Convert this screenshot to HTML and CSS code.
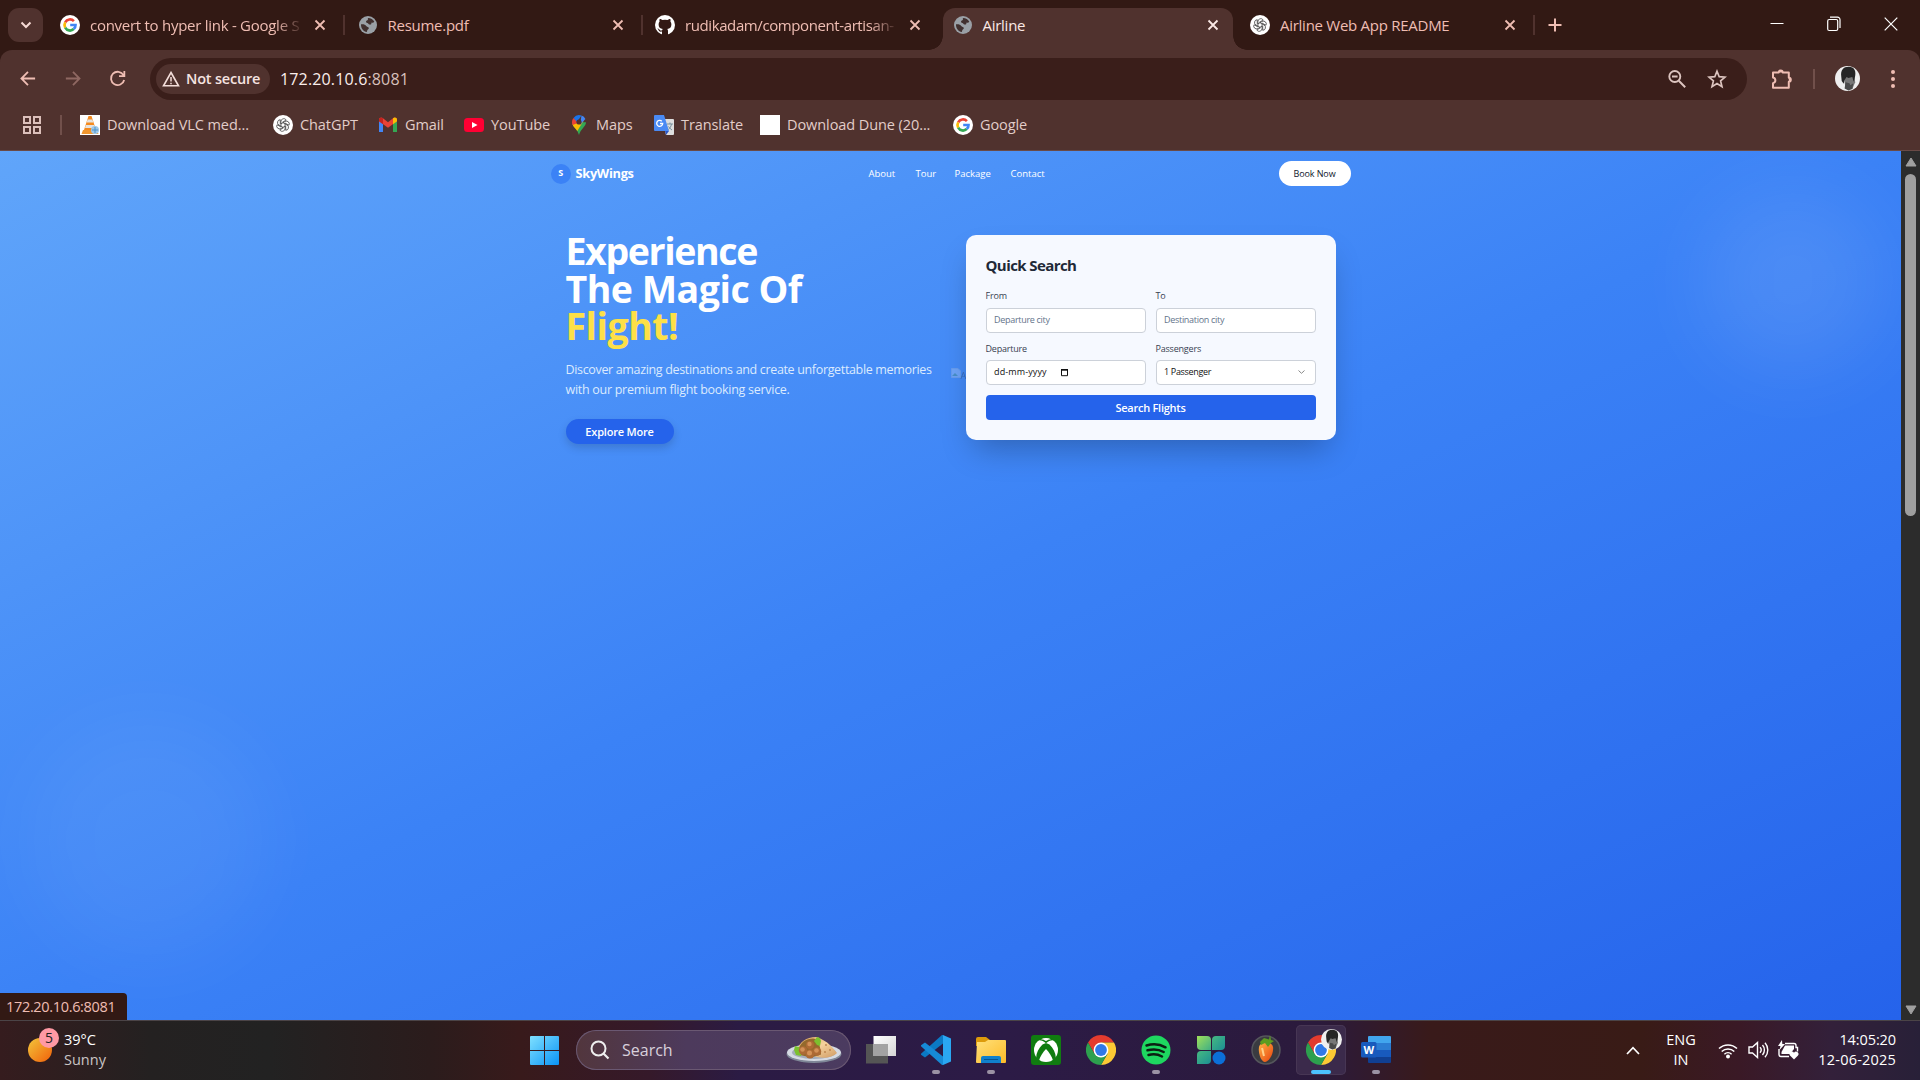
FILE: index.html
```html
<!DOCTYPE html>
<html lang="en">
<head>
<meta charset="utf-8">
<title>Airline</title>
<link rel="stylesheet" href="styles.css">
</head>
<body>
<svg class="defs" width="0" height="0">
  <defs>
    <linearGradient id="sun" x1="0" y1="0" x2="1" y2="1"><stop offset="0" stop-color="#f3c63b"/><stop offset="1" stop-color="#f0600a"/></linearGradient>
    <linearGradient id="win" x1="0" y1="0" x2="1" y2="1"><stop offset="0" stop-color="#7fe0ff"/><stop offset="1" stop-color="#0a93f5"/></linearGradient>
    <linearGradient id="folder" x1="0" y1="0" x2="1" y2="1"><stop offset="0" stop-color="#ffe07a"/><stop offset="1" stop-color="#fdbb28"/></linearGradient>
    <linearGradient id="leaf" x1="0" y1="0" x2="1" y2="1"><stop offset="0" stop-color="#a0e05a"/><stop offset="1" stop-color="#3fae85"/></linearGradient>
    <linearGradient id="leaf2" x1="0" y1="0" x2="1" y2="1"><stop offset="0" stop-color="#46b981"/><stop offset="1" stop-color="#1c8f93"/></linearGradient>
    <linearGradient id="fruit" x1="0" y1="0" x2="1" y2="1"><stop offset="0" stop-color="#ffb347"/><stop offset="1" stop-color="#e8420e"/></linearGradient>
    <linearGradient id="bread" x1="0" y1="0" x2="1" y2="1"><stop offset="0" stop-color="#d9a25a"/><stop offset=".5" stop-color="#f5d29d"/><stop offset="1" stop-color="#cf9a63"/></linearGradient>
    <linearGradient id="task" x1="0" y1="0" x2="1" y2="1"><stop offset="0" stop-color="#fff"/><stop offset="1" stop-color="#d5d5d5"/></linearGradient>
    <symbol id="google" viewBox="0 0 20 20"><circle cx="10" cy="10" r="10" fill="#fff"/><g fill="none" stroke-width="2.7"><path d="M13.9 6.1A5.5 5.5 0 0 0 5.2 7.3" stroke="#ea4335"/><path d="M5.2 7.3a5.6 5.6 0 0 0 0 5.4" stroke="#fbbc05"/><path d="M5.2 12.7a5.5 5.5 0 0 0 8.5 1.4" stroke="#34a853"/><path d="M13.7 14.1A5.3 5.3 0 0 0 15.5 10H10.2" stroke="#4285f4"/></g></symbol>
    <symbol id="globe" viewBox="0 0 18 18"><circle cx="9" cy="9" r="9" fill="#9aa0a6"/><path d="M2 8.300c2.500-.2 4.500.2 5.200 1.700.6 1.100 2.400.7 2.600 2.100.2 1.200-1.300 1.300-1.600 2.300-.2.700-.2 1.200-.4 1.700C4.500 15.600 1.800 12.500 2 8.300zM9 2c2.900 0 5.200 1.500 6.300 3.800-.7.900-1.900 1.200-2.700.6-.5.9.1 1.600-.9 2-1 .4-2.300-.2-2.700-1.200-1-.1-2-.5-2-1.700s1.500-.9 1.900-1.800c.2-.6-.3-1.200.1-1.700z" fill="#41302f"/></symbol>
    <symbol id="gpt" viewBox="0 0 20 20"><circle cx="10" cy="10" r="10" fill="#fff"/><g fill="none" stroke="#333" stroke-width=".7"><path id="petal" d="M8 11.100V6.400a2.800 2.800 0 0 1 5.200-1.400L9.300 7.300"/><use href="#petal" transform="rotate(60 10 10)"/><use href="#petal" transform="rotate(120 10 10)"/><use href="#petal" transform="rotate(180 10 10)"/><use href="#petal" transform="rotate(240 10 10)"/><use href="#petal" transform="rotate(300 10 10)"/></g></symbol>
    <symbol id="x" viewBox="0 0 12 12"><path d="M1.500 1.500l9 9m0-9l-9 9" fill="none" stroke="currentColor" stroke-width="1.800"/></symbol>
    <symbol id="chrome" viewBox="0 0 30 30"><path d="M15 0A15 15 0 0 1 28 7.500H15L8.500 18.800 2 7.500A15 15 0 0 1 15 0z" fill="#e33b2e"/><path d="M28 7.500A15 15 0 0 1 15 30l6.500-11.300L15 7.500z" fill="#fcc934"/><path d="M2 7.500A15 15 0 0 0 15 30l6.500-11.200h-13z" fill="#2da04e"/><circle cx="15" cy="15" r="7.400" fill="#fff"/><circle cx="15" cy="15" r="5.900" fill="#3079e8"/></symbol>
    <symbol id="portrait" viewBox="0 0 26 26"><circle cx="13" cy="13" r="13" fill="#efefef"/><path d="M9 10l11-2 1 9-3 7-7-1-1-6z" fill="#777"/><path d="M6.500 11C5.500 4 9 .8 14 .8c6.500 0 8.500 5 6.500 11.700l-1 4-1.500-5-4 1-2-1-2 3-1 4-2-3z" fill="#252525"/><path d="M11 17l4 1 1 2 3-2-1 6-4 1.500-4-2z" fill="#4a4a4a"/></symbol>
  </defs>
</svg>

<div class="browser">
  <header class="tabs">
    <button class="tab-search"><svg width="12" height="8" viewBox="0 0 12 8"><path d="M1.500 1.500L6 6l4.500-4.500" fill="none" stroke="#f6d9d4" stroke-width="2"/></svg></button>
    <div class="tab"><svg class="fav"><use href="#google"/></svg><span class="title fade">convert to hyper link - Google S</span><svg class="x"><use href="#x"/></svg></div>
    <div class="tab"><svg class="fav globe"><use href="#globe"/></svg><span class="title">Resume.pdf</span><svg class="x"><use href="#x"/></svg></div>
    <div class="tab nosep"><svg class="fav" viewBox="0 0 20 20"><circle cx="10" cy="10" r="10" fill="#fff"/><path d="M7 20v-3.400c-2.600.6-3.300-1-3.700-2-.2-.4-.6-.8-1-1 1.500-.3 2 1 2.500 1.500.7.700 1.600.6 2.300.2.100-.6.400-1 .7-1.200C5 13.700 3.600 12.300 3.600 9.300c0-1.100.4-2 1-2.700-.2-.6-.3-1.600.1-2.700 1 0 2 .6 2.800 1.100a9 9 0 0 1 5 0c.8-.5 1.800-1.100 2.800-1.100.4 1.100.3 2.100.1 2.700.6.700 1 1.600 1 2.700 0 3-1.400 4.400-4.200 4.800.6.500.8 1.100.8 2V20z" fill="#321914"/></svg><span class="title fade tight">rudikadam/component-artisan-</span><svg class="x"><use href="#x"/></svg></div>
    <div class="tab active nosep"><svg class="fav globe"><use href="#globe"/></svg><span class="title">Airline</span><svg class="x"><use href="#x"/></svg></div>
    <div class="tab"><svg class="fav"><use href="#gpt"/></svg><span class="title">Airline Web App README</span><svg class="x"><use href="#x"/></svg></div>
    <svg class="plus" width="14" height="14" viewBox="0 0 14 14"><path d="M7 .5v13M.5 7h13" stroke="#efbdb3" stroke-width="2"/></svg>
    <div class="controls">
      <svg width="14" height="14" viewBox="0 0 14 14"><path d="M.5 6.500h13" stroke="#fff"/></svg>
      <svg width="14" height="16" viewBox="0 0 14 16"><rect x=".7" y="3.500" width="10" height="11" rx="1.500" fill="none" stroke="#fff" stroke-width="1.200"/><path d="M3 1.200h7.500a2.500 2.500 0 0 1 2.500 2.500V12" fill="none" stroke="#fff" stroke-width="1.200"/></svg>
      <svg width="14" height="14" viewBox="0 0 14 14"><path d="M.7.7l12.600 12.600m0-12.600L.7 13.300" stroke="#fff" stroke-width="1.200"/></svg>
    </div>
  </header>

  <div class="toolbar">
    <svg class="nav-ic" viewBox="0 0 20 20"><path d="M18 10H4m6.500-7L3.600 10l6.900 7" fill="none" stroke="#efbdb3" stroke-width="1.900"/></svg>
    <svg class="nav-ic" viewBox="0 0 20 20"><path d="M3 10h14M10.500 3l6.900 7-6.900 7" fill="none" stroke="#8f6862" stroke-width="1.900"/></svg>
    <svg class="nav-ic" viewBox="0 0 20 20"><path d="M16.300 6.500A7 7 0 1 0 17 11.500M17.200 2v5.600h-5.600" fill="none" stroke="#efbdb3" stroke-width="1.900"/></svg>
    <div class="omnibox">
      <span class="chip"><svg width="18" height="16" viewBox="0 0 18 16"><path d="M9 1.500l7.500 13.300h-15z" fill="none" stroke="#f3ddd9" stroke-width="1.600"/><path d="M9 6v4.500m0 1.200v1.600" stroke="#f3ddd9" stroke-width="1.500"/></svg><b>Not secure</b></span>
      <span class="url"><i>172.20.10.6</i>:8081</span>
      <svg class="ob" viewBox="0 0 20 20"><circle cx="7.800" cy="7.500" r="5.500" fill="none" stroke="#dcc4bf" stroke-width="1.900"/><path d="M11.800 11.800l6.400 6.400M5 7.500h5.600" stroke="#dcc4bf" stroke-width="2"/></svg>
      <svg class="ob" viewBox="0 0 20 20"><path d="M10 2.200l2.200 5.500 5.900.4-4.500 3.800 1.400 5.800-5-3.100-5 3.100 1.400-5.800L1.900 8.100l5.900-.4z" fill="none" stroke="#dcc4bf" stroke-width="1.700"/></svg>
    </div>
    <svg class="ext" viewBox="0 0 22 22"><path d="M2 4.500h5.700a2 2 0 0 1 4 0h6.100v5.200a2 2 0 0 1 0 4v6.100H2v-4.600a2.900 2.900 0 0 0 0-5.700z" fill="none" stroke="#efbdb3" stroke-width="2" stroke-linejoin="round"/><path d="M7.700 4.500a2 2 0 0 1 4 0zM17.800 9.700a2 2 0 0 1 0 4z" fill="#efbdb3"/></svg>
    <span class="vsep"></span>
    <svg class="avatar"><use href="#portrait"/></svg>
    <svg class="dots" width="4" height="18" viewBox="0 0 4 18"><g fill="#efbdb3"><circle cx="2" cy="2" r="2"/><circle cx="2" cy="9" r="2"/><circle cx="2" cy="16" r="2"/></g></svg>
  </div>

  <nav class="bookmarks">
    <svg class="apps" width="18" height="18" viewBox="0 0 18 18"><path d="M1 1h6v6H1zM11 1h6v6h-6zM1 11h6v6H1zM11 11h6v6h-6z" fill="none" stroke="#dcc0bb" stroke-width="2"/></svg>
    <span class="vsep"></span>
    <a class="b1"><svg viewBox="0 0 20 20"><path d="M0 0h20v20H0z" fill="#fff"/><path d="M8.500 1h3l4.500 14H4z" fill="#f58a1f"/><path d="M7.600 4.500h4.800l.9 3H6.700zM5.900 10h8.200l.9 3H5z" fill="#e6e3df"/><path d="M3 15h14l1.500 4h-17z" fill="#f0962e"/><circle cx="15" cy="15" r="4" fill="#9cc8ea"/><path d="M12 15h6m-3-3v6" stroke="#4e92c8"/></svg><span>Download VLC med...</span></a>
    <a class="b2"><svg><use href="#gpt"/></svg><span>ChatGPT</span></a>
    <a class="b3"><svg viewBox="0 0 20 20"><path d="M1 5v12h4V8z" fill="#4285f4"/><path d="M15 8v9h4V5z" fill="#34a853"/><path d="M1 5c0-2.500 2.500-3 4-1.700l5 4 5-4c1.500-1.300 4-.8 4 1.700v1.200l-9 6.600-9-6.600z" fill="#ea4335"/><path d="M15 3.300c1.500-1.300 4-.8 4 1.700v1.200l-4 3z" fill="#fbbc04"/><path d="M1 5c0-2 1.800-2.900 4-1.700v5.900L1 6.200z" fill="#c5221f"/></svg><span>Gmail</span></a>
    <a class="b4"><svg viewBox="0 0 20 20"><rect y="3" width="20" height="14" rx="3.500" fill="#ff0033"/><path d="M8 7l5.500 3L8 13z" fill="#fff"/></svg><span>YouTube</span></a>
    <a class="b5"><svg viewBox="0 0 20 20"><path d="M3 7.200c0 4.500 5.500 6.500 7 12.800 1.500-6.300 7-8.300 7-12.800z" fill="#34a853"/><path d="M3.500 9.500C4.400 12 6.800 13.600 8.300 16L15 5z" fill="#fbbc04"/><path d="M4.500 3l5.500 4.500L3.500 10C2.500 7 3 4.800 4.500 3z" fill="#ea4335"/><path d="M4.500 3A7 7 0 0 1 12.500.6L8 7z" fill="#1a73e8"/><path d="M12.500.6A7 7 0 0 1 16.400 4L11 10z" fill="#4285f4"/><circle cx="10" cy="7" r="2.600" fill="#50322e"/></svg><span>Maps</span></a>
    <a class="b6"><svg viewBox="0 0 20 20"><path d="M8 4h11a1 1 0 0 1 1 1v14a1 1 0 0 1-1 1h-7z" fill="#dedede"/><path d="M1 0h9l5 16H1a1 1 0 0 1-1-1V1a1 1 0 0 1 1-1z" fill="#4a8af4"/><path d="M11 16h4l-3 4z" fill="#2a56c6"/><path d="M7.800 6.300A3 3 0 1 0 8.700 8.500H6" fill="none" stroke="#fff" stroke-width="1.300"/><path d="M13 9h6m-3-1.500V9m1.500 0c-.5 3-2 4.500-3 5.500m0-3c1 1.500 2 2.500 3.500 3.500" fill="none" stroke="#78909c"/></svg><span>Translate</span></a>
    <a class="b7"><svg viewBox="0 0 20 20"><path d="M0 0h20v20H0z" fill="#fff"/></svg><span>Download Dune (20...</span></a>
    <a class="b8"><svg><use href="#google"/></svg><span>Google</span></a>
  </nav>

  <div class="viewport">
    <main class="page">
      <div class="blob blob-a"></div>
      <div class="blob blob-b"></div>
      <div class="site-nav">
        <div class="brand"><span class="mark">S</span><strong>SkyWings</strong></div>
        <div class="links"><a class="l1">About</a><a class="l2">Tour</a><a class="l3">Package</a><a class="l4">Contact</a></div>
        <button class="book"><span>Book Now</span></button>
      </div>
      <section class="hero">
        <div class="copy">
          <h1><span class="h-a">Experience</span><span class="h-b">The Magic Of</span><span class="h-c">Flight!</span></h1>
          <p><span class="p-a">Discover amazing destinations and create unforgettable memories</span><span class="p-b">with our premium flight booking service.</span></p>
          <button class="explore"><span>Explore More</span></button>
        </div>
        <div class="search-side">
          <div class="broken"><svg width="10" height="10" viewBox="0 0 10 10"><path d="M.5.500h6.500l2.500 2.500v6.500h-9z" fill="#b9d3fb" stroke="#a8bfdf"/><path d="M1 8l3-3 3 3z" fill="#4f9a73"/></svg>A</div>
          <form class="card">
            <h2>Quick Search</h2>
            <div class="grid">
              <label><span>From</span><div class="field ph"><span>Departure city</span></div></label>
              <label><span>To</span><div class="field ph"><span>Destination city</span></div></label>
              <label><span>Departure</span><div class="field date"><span>dd-mm-yyyy</span><svg class="cal" width="8" height="9" viewBox="0 0 8 9"><path d="M.5 1.500h6v6.200h-6z" fill="none" stroke="#111"/><path d="M0 1h7v1.700H0z" fill="#111"/></svg></div></label>
              <label><span>Passengers</span><div class="field sel"><span>1 Passenger</span><svg width="7" height="4" viewBox="0 0 7 4"><path d="M.5.500l3 2.800 3-2.800" fill="none" stroke="#888"/></svg></div></label>
            </div>
            <button class="go" type="button"><span>Search Flights</span></button>
          </form>
        </div>
      </section>
      <div class="status"><span>172.20.10.6:8081</span></div>
    </main>
    <aside class="scroll"><svg width="12" height="10" viewBox="0 0 12 10"><path d="M6 1l5 8H1z" fill="#a0a0a0" stroke="#a0a0a0" stroke-linejoin="round"/></svg><div class="thumb"></div><svg width="12" height="10" viewBox="0 0 12 10"><path d="M6 9l5-8H1z" fill="#a0a0a0" stroke="#a0a0a0" stroke-linejoin="round"/></svg></aside>
  </div>
</div>

<footer class="taskbar">
  <div class="weather">
    <svg width="32" height="36" viewBox="0 0 32 36"><circle cx="12" cy="22" r="12" fill="url(#sun)"/><circle cx="21" cy="10" r="10" fill="#ff99a4"/><text x="21" y="15" text-anchor="middle" class="badge">5</text></svg>
    <div><span class="w-a">39°C</span><span class="w-b">Sunny</span></div>
  </div>
  <div class="dock">
    <svg class="start" width="29" height="29" viewBox="0 0 29 29"><path d="M1 0h13v14H0V1a1 1 0 0 1 1-1zM15 0h13a1 1 0 0 1 1 1v13H15zM0 15h14v14H1a1 1 0 0 1-1-1zM15 15h14v13a1 1 0 0 1-1 1H15z" fill="url(#win)"/></svg>
    <div class="search">
      <svg width="20" height="20" viewBox="0 0 20 20"><circle cx="8.500" cy="8.500" r="7" fill="none" stroke="#eee" stroke-width="2"/><path d="M13.500 13.500l5 5" stroke="#eee" stroke-width="2.200"/></svg>
      <span>Search</span>
      <svg class="food" width="56" height="28" viewBox="0 0 56 28"><ellipse cx="28" cy="18" rx="27.500" ry="9" fill="#7f8797"/><ellipse cx="28" cy="16.500" rx="27" ry="8.500" fill="#d5dae3"/><ellipse cx="28" cy="16.500" rx="22" ry="6.500" fill="#a4acba"/><path d="M11 14C14 6 20 1 30 1c3 0 4 2 7 3 6 3 10 8 14 13-4 4-12 6-20 4z" fill="url(#bread)"/><path d="M12 14C15 6 20 2.500 27 2.500c4 0 6 4 7 9l1 7-10 3-13-3z" fill="#94692c"/><path d="M8 14l1-4 4 1 3 3-1 6-5-1zM28 5l3-4 3 1 1 3-1 5-3-1z" fill="#7cc02e"/><g fill="#ad6a35"><circle cx="24" cy="9" r="4"/><circle cx="17" cy="14.500" r="4.200"/><circle cx="31" cy="15.500" r="4.200"/><circle cx="24" cy="18" r="4.500"/></g><g fill="#d39157"><circle cx="23.500" cy="8" r="2.200"/><circle cx="16.500" cy="13.500" r="2.300"/><circle cx="30.500" cy="14.500" r="2.300"/><circle cx="23.500" cy="17" r="2.500"/></g><g fill="#b9814a"><circle cx="40" cy="9" r=".9"/><circle cx="44" cy="14" r=".9"/><circle cx="39" cy="16" r=".9"/></g></svg>
    </div>
    <div class="app"><svg viewBox="0 0 30 30"><path d="M0 9h22v19.500H0z" fill="#555"/><path d="M7.500 1H30v20H7.500z" fill="url(#task)"/><path d="M7.500 9H22v12H7.500z" fill="#a2a2a2"/></svg></div>
    <div class="app run"><svg viewBox="0 0 30 30"><path d="M22 8.500L4 22.500 0 19.700v-1L21 0h1z" fill="#0b79c4"/><path d="M22 21.500L4 7.500 0 10.300v1L21 30h1z" fill="#168ad6"/><path d="M22 0l8 3.500v23L22 30z" fill="#2aa7f2"/></svg></div>
    <div class="app run"><svg viewBox="0 0 30 30"><path d="M0 4a2 2 0 0 1 2-2h8l4 3v6H0z" fill="#dd9b0b"/><path d="M1 7h8l3-2h17a1 1 0 0 1 1 1v21a1 1 0 0 1-1 1H1a1 1 0 0 1-1-1z" fill="url(#folder)"/><path d="M5 28v-5a2 2 0 0 1 2-2h16a2 2 0 0 1 2 2v5z" fill="#1080cc"/><path d="M8 24.500h14" stroke="#075591"/></svg></div>
    <div class="app"><svg viewBox="0 0 30 30"><rect width="30" height="30" rx="3" fill="#107c10"/><circle cx="15" cy="15" r="12" fill="#fff"/><path d="M7 5.500c3-.6 5.500.8 8 2.700 2.500-1.900 5-3.300 8-2.700C18-.5 12-.5 7 5.500zM11.500 9.500C7.500 13.500 5 18.500 5.200 23L8 25.500c1-4 4-8.500 7-11.500 3 3 6 7.500 7 11.500l2.800-2.500c.2-4.500-2.300-9.500-6.300-13.500L15 8z" fill="#107c10"/><path d="M10 4.200c2 0 3.500.8 5 1.900 1.500-1.100 3-1.900 5-1.900-3-1.500-7-1.500-10 0z" fill="#fff"/></svg></div>
    <div class="app"><svg><use href="#chrome"/></svg></div>
    <div class="app run"><svg viewBox="0 0 30 30"><circle cx="15" cy="15" r="14.500" fill="#1ed760"/><path d="M5.500 10.500c6.500-2 13.500-1.300 19 1.800M6.500 15.300c5.500-1.500 11.500-1 16.200 1.700M7.500 20c4.500-1.200 9.500-.8 13.500 1.500" fill="none" stroke="#0b2012" stroke-width="2.500" stroke-linecap="round"/></svg></div>
    <div class="app"><svg viewBox="0 0 30 30"><path d="M1 1h10a4 4 0 0 1 4 4v10H5a4 4 0 0 1-4-4z" fill="url(#leaf)"/><path d="M20 1h9v10a4 4 0 0 1-4 4h-9V5a4 4 0 0 1 4-4z" fill="url(#leaf2)"/><path d="M5 16h10v9a4 4 0 0 1-4 4H1v-9a4 4 0 0 1 4-4z" fill="url(#leaf2)"/><circle cx="23" cy="23" r="6.500" fill="#0b6fd8"/></svg></div>
    <div class="app"><svg viewBox="0 0 30 30"><circle cx="15" cy="15" r="14" fill="#3a3b40" stroke="#55565c" stroke-width="1.500"/><path d="M8 12c1-6 13-6 14 0 1 6-4 15-8 15-4 0-7-9-6-15z" fill="url(#fruit)"/><path d="M11 13c1 3 1 5 2 8" stroke="#ffd08a" stroke-width="2" fill="none"/><path d="M9 7l4-4 5 1.500L19 0l1 5 3 1-3 2-3 4-3-4-4 2z" fill="#5d9c20"/></svg></div>
    <div class="app current"><svg><use href="#chrome"/></svg><svg class="who"><use href="#portrait"/></svg></div>
    <div class="app run"><svg viewBox="0 0 30 30"><path d="M8 1h21a1 1 0 0 1 1 1v6H7V2a1 1 0 0 1 1-1z" fill="#41a5ee"/><path d="M7 8h23v7H7z" fill="#2b7cd3"/><path d="M7 15h23v7H7z" fill="#185abd"/><path d="M7 22h23v5a1 1 0 0 1-1 1H8a1 1 0 0 1-1-1z" fill="#103f91"/><rect y="7" width="15.500" height="15.500" rx="1.500" fill="#185abd"/><text x="7.700" y="18.500" text-anchor="middle" class="w">W</text></svg></div>
  </div>
  <div class="tray">
    <svg class="up" width="14" height="9" viewBox="0 0 14 9"><path d="M1 8l6-6.300L13 8" fill="none" stroke="#fff" stroke-width="1.700"/></svg>
    <div class="lang"><span>ENG</span><span>IN</span></div>
    <svg class="wifi" width="20" height="17" viewBox="0 0 20 17"><g fill="none" stroke="#fff" stroke-width="1.500"><path d="M1 6.500a13 13 0 0 1 18 0M3.700 9.500a9 9 0 0 1 12.600 0M6.400 12.300a5.200 5.200 0 0 1 7.200 0"/></g><circle cx="10" cy="14.500" r="2" fill="#fff"/></svg>
    <svg class="vol" width="21" height="18" viewBox="0 0 21 18"><g fill="none" stroke="#fff" stroke-width="1.400"><path d="M1 6h3.500l5-4.500v15l-5-4.500H1zM12 6.300a4 4 0 0 1 0 5.400M14.500 4a7.500 7.500 0 0 1 0 10M17 1.700a11 11 0 0 1 0 14.600"/></g></svg>
    <svg class="bat" width="21" height="20" viewBox="0 0 21 20"><path d="M7 3.500h9a2 2 0 0 1 2 2v2h1.500v4M1 9v5.500a2 2 0 0 0 2 2h8" fill="none" stroke="#fff" stroke-width="1.400"/><path d="M7 5.500h9V9l-4 5H3.500V12z" fill="#fff"/><path d="M4 0L0 6h2.500L1.500 10 7 4H4.300z" fill="#fff"/><path d="M16 19.500l-4-4a2.300 2.300 0 0 1 4-2.800 2.300 2.300 0 0 1 4 2.800z" fill="#fff"/></svg>
    <div class="clock"><span class="c-a">14:05:20</span><span class="c-b">12-06-2025</span></div>
  </div>
</footer>
</body>
</html>
```
FILE: styles.css
```css
* { box-sizing: border-box; }
body { margin: 0; width: 1920px; height: 1080px; overflow: hidden; display: flex; flex-direction: column; font-family: "Open Sans", "Noto Sans", sans-serif; background: #321914; }
button { border: 0; padding: 0; font: inherit; color: inherit; }
svg { display: block; flex: none; }
span { white-space: nowrap; }
.defs { position: absolute; }
.browser { height: 1020px; display: flex; flex-direction: column; background: #321914; }

.tabs { height: 50px; display: flex; align-items: flex-start; background: #321914; padding-left: 8px; }
.tab-search { width: 35px; height: 34px; margin: 8px 5px 0 0; border-radius: 11px; background: #50322e; display: grid; place-items: center; }
.tab { position: relative; width: 297.5px; height: 50px; padding-left: 12px; display: flex; align-items: center; color: #efbdb3; font-size: 15px; letter-spacing: -.27px; }
.fav { width: 20px; height: 20px; margin-right: 10px; }
.fav.globe { width: 18px; height: 18px; margin-left: 1px; margin-right: 11px; }
.title { width: 210px; margin-right: 14px; }
.fade { mask-image: linear-gradient(90deg, #000 88%, transparent 102%); }
.tight { letter-spacing: -.4px; }
.x { width: 12px; height: 12px; }
.tab::after { content: ""; position: absolute; right: .5px; top: 15px; width: 2px; height: 20px; background: #50322e; }
.tab.nosep::after { display: none; }
.tab.active { color: #fbe9e6; }
.tab.active::before { content: ""; position: absolute; left: 2px; top: 8px; width: 290px; height: 42px; border-radius: 12px 12px 0 0; background: #50322e; }
.tab.active > * { position: relative; }
.tab.active::after { display: block; left: -12px; right: auto; top: 36px; width: 318px; height: 14px; background: radial-gradient(circle at 0 0, transparent 13.500px, #50322e 14px) 0 0 / 14px 14px no-repeat, radial-gradient(circle at 100% 0, transparent 13.500px, #50322e 14px) 100% 0 / 14px 14px no-repeat; }
.plus { margin: 18px 0 0 12.500px; }
.controls { margin-left: auto; margin-right: 22px; height: 48px; display: flex; align-items: center; gap: 43px; }

.toolbar { height: 57px; display: flex; align-items: center; padding-left: 18px; border-radius: 12px 12px 0 0; background: #50322e; }
.nav-ic { width: 19px; height: 19px; margin-right: 26px; }
.omnibox { width: 1597px; height: 42px; margin-left: -3px; border-radius: 21px; background: #3a1e1a; display: flex; align-items: center; padding-left: 6px; }
.chip { width: 114px; height: 30px; border-radius: 15px; background: #50322e; color: #f6e4e1; display: flex; align-items: center; padding-left: 6px; gap: 6px; font-size: 14.500px; letter-spacing: -.2px; }
.chip b { font-weight: 600; }
.url { color: #d8c0bc; font-size: 16px; letter-spacing: .15px; margin-left: 10px; flex: 1; }
.url i { font-style: normal; color: #fbeeec; }
.ob { width: 20px; height: 20px; margin-right: 20px; }
.ext { width: 22px; height: 22px; margin-left: 24px; }
.vsep { width: 2px; height: 20px; background: #71504b; }
.toolbar .vsep { margin: 0 20px 0 20px; }
.avatar { width: 25px; height: 25px; }
.dots { margin-left: 31px; }

.bookmarks { height: 43px; display: flex; align-items: center; padding: 0 0 7px 23px; background: #50322e; color: #e2cdc9; font-size: 14.500px; letter-spacing: -.08px; }
.bookmarks .vsep { margin: 0 18px 0 19px; }
.bookmarks a { display: flex; align-items: center; gap: 7px; }
.bookmarks a svg { width: 20px; height: 20px; }
.bookmarks a span { padding-bottom: 2px; }
.b1 { width: 193px; } .b2 { width: 105px; } .b3 { width: 86px; } .b4 { width: 105px; } .b5 { width: 85px; } .b6 { width: 106px; } .b7 { width: 193px; }

.viewport { height: 870px; display: flex; border-top: 1px solid #6a4a46; }
.page { position: relative; width: 1901px; overflow: hidden; background: linear-gradient(to bottom right, #60a5fa, #3b82f6, #2563eb); color: #fff; }
.blob { position: absolute; border-radius: 50%; background: rgba(255,255,255,.09); }
.blob-a { right: 18px; top: 39px; width: 180px; height: 180px; filter: blur(38px); }
.blob-b { left: 28px; bottom: 60px; width: 240px; height: 240px; background: rgba(255,255,255,.05); filter: blur(38px); }
.site-nav { position: relative; width: 800px; height: 45px; margin: 0 auto; display: flex; align-items: center; justify-content: space-between; }
.brand { display: flex; align-items: center; gap: 5px; font-size: 12.800px; letter-spacing: -.3px; width: 282px; }
.brand strong { padding-bottom: 1px; }
.mark { width: 20px; height: 20px; border-radius: 50%; background: #3b82f6; font-weight: 700; font-size: 9px; line-height: 18px; text-align: center; }
.links { display: flex; flex: 1; font-size: 9.500px; font-weight: 500; letter-spacing: 0; margin-left: 36px; }
.l1 { width: 47px; } .l2 { width: 39px; } .l3 { width: 56px; }
.book { width: 72px; height: 25px; padding-bottom: 1px; border-radius: 13px; background: #fff; color: #0f172a; font-size: 9px; font-weight: 500; letter-spacing: -.1px; }
.hero { position: relative; width: 770px; margin: 39px auto 0; display: flex; align-items: flex-start; justify-content: space-between; }
h1 { margin: -3px 0 0; font-size: 37.500px; line-height: 37.500px; font-weight: 700; }
h1 span, p span { display: table; }
.h-a { letter-spacing: -1.380px; }
.h-b { letter-spacing: -.5px; }
.h-c { color: #fde047; letter-spacing: -.5px; }
p { margin: 15px 0 0; font-size: 12.500px; line-height: 20.300px; color: #dbeafe; letter-spacing: -.34px; }
.p-b { letter-spacing: -.28px; }
.explore { display: block; width: 108px; height: 25px; margin-top: 19px; border-radius: 13px; background: #2563eb; box-shadow: 0 4px 8px rgba(0,0,0,.15); font-weight: 600; font-size: 11px; letter-spacing: -.2px; }
.search-side { position: relative; width: 370px; }
.broken { position: absolute; left: -15px; top: 133px; display: flex; gap: 0; font-size: 9px; line-height: 16px; opacity: .35; color: #234; }
.card { position: relative; height: 205px; padding: 19px 20px; border-radius: 10px; background: #f6f9ff; box-shadow: 0 16px 32px -8px rgba(0,0,0,.27); color: #1f2937; }
h2 { margin: 0 0 14px; font-size: 15px; line-height: 22px; font-weight: 700; letter-spacing: -.58px; }
.grid { display: grid; grid-template-columns: 160px 160px; gap: 10px; }
label { height: 42px; display: flex; flex-direction: column; justify-content: space-between; align-items: flex-start; font-size: 9px; line-height: 12px; font-weight: 500; letter-spacing: -.2px; color: #374151; }
label > span { line-height: 11px; }
.grid label:nth-child(-n+2) { height: 43px; }
.field { width: 160px; height: 25px; padding: 0 8px 1px 7.500px; display: flex; align-items: center; background: #fff; border: 1px solid #ccd1d9; border-radius: 4px; color: #111; font-weight: 400; }
.ph { color: #64748b; letter-spacing: -.3px; }
.date { letter-spacing: .12px; }
.cal { margin-left: 14px; }
.sel { justify-content: space-between; padding-right: 10px; letter-spacing: -.33px; }
.go { width: 330px; height: 25px; margin-top: 10px; display: block; border-radius: 4px; background: #2563eb; color: #fff; font-size: 11px; font-weight: 600; letter-spacing: -.25px; }
.status { position: absolute; left: 0; bottom: 0; width: 127px; height: 27px; padding-left: 6px; border-radius: 0 4px 0 0; background: #321914; color: #efbdb3; font-size: 14.500px; line-height: 27px; letter-spacing: -.33px; }
.scroll { width: 19px; background: #2c2c2c; display: flex; flex-direction: column; align-items: center; padding: 6px 0 5px; }
.thumb { width: 11px; height: 342px; margin: 7px 0 auto; border-radius: 6px; background: #9f9f9f; }

.taskbar { height: 60px; border-top: 1px solid #4b4447; display: flex; color: #fff; background: linear-gradient(90deg, #351c1e 0, #242121 150px, #222 270px, #2b1c1c 430px, #381a1b 520px, #35192a 650px, #2b1b44 740px, #2c1b46 1000px, #2b1a3c 1320px, #391a1a 1430px, #391b16 1640px, #3a1926 1740px, #33203a 1830px, #282038 1920px); }
.weather { width: 529px; padding: 7px 0 0 28px; display: flex; gap: 4px; }
.weather div, .lang, .clock { display: flex; flex-direction: column; font-size: 14.500px; line-height: 20px; }
.weather div { padding-top: 2px; }
.w-b { color: #c9c5c5; }
.badge { font-size: 14px; fill: #222; }
.dock { width: 882px; display: flex; align-items: center; padding-bottom: 1px; }
.start { margin: 0 17px 0 1px; }
.search { width: 275px; height: 40px; border-radius: 20px; background: linear-gradient(90deg, #52363d, #4d3a5c 40%, #4b3b60); box-shadow: inset 0 0 0 1px #6a5872; display: flex; align-items: center; padding-left: 14px; margin-right: 5px; color: #d8d0dc; font-size: 16px; }
.search span { margin-left: 12px; flex: 1; }
.food { margin-right: 9px; }
.app { position: relative; width: 50px; height: 50px; margin-right: 5px; border-radius: 5px; display: grid; place-items: center; flex: none; }
.app svg { width: 30px; height: 30px; }
.app.run::after, .current::after { content: ""; position: absolute; left: 21px; bottom: 1px; width: 8px; height: 4px; border-radius: 2px; background: #9b92a4; }
.app.current { background: #3b2a4b; box-shadow: inset 0 0 0 1px #473654; }
.app.current::after { left: 15px; width: 20px; background: #4cc2ff; }
.app .who { position: absolute; left: 25px; top: 4px; width: 21px; height: 21px; }
.w { font: 700 11px "Open Sans", sans-serif; fill: #fff; }
.tray { flex: 1; display: flex; align-items: center; padding: 0 0 1px 215px; }
.lang { width: 30px; margin-left: 26px; align-items: center; }
.wifi { margin-left: 22px; }
.vol { margin-left: 10px; }
.bat { margin-left: 9px; }
.clock { flex: 1; align-items: flex-end; padding: 0 24px 1px 0; }
.c-a { letter-spacing: -.1px; }
.c-b { letter-spacing: .2px; }
```
